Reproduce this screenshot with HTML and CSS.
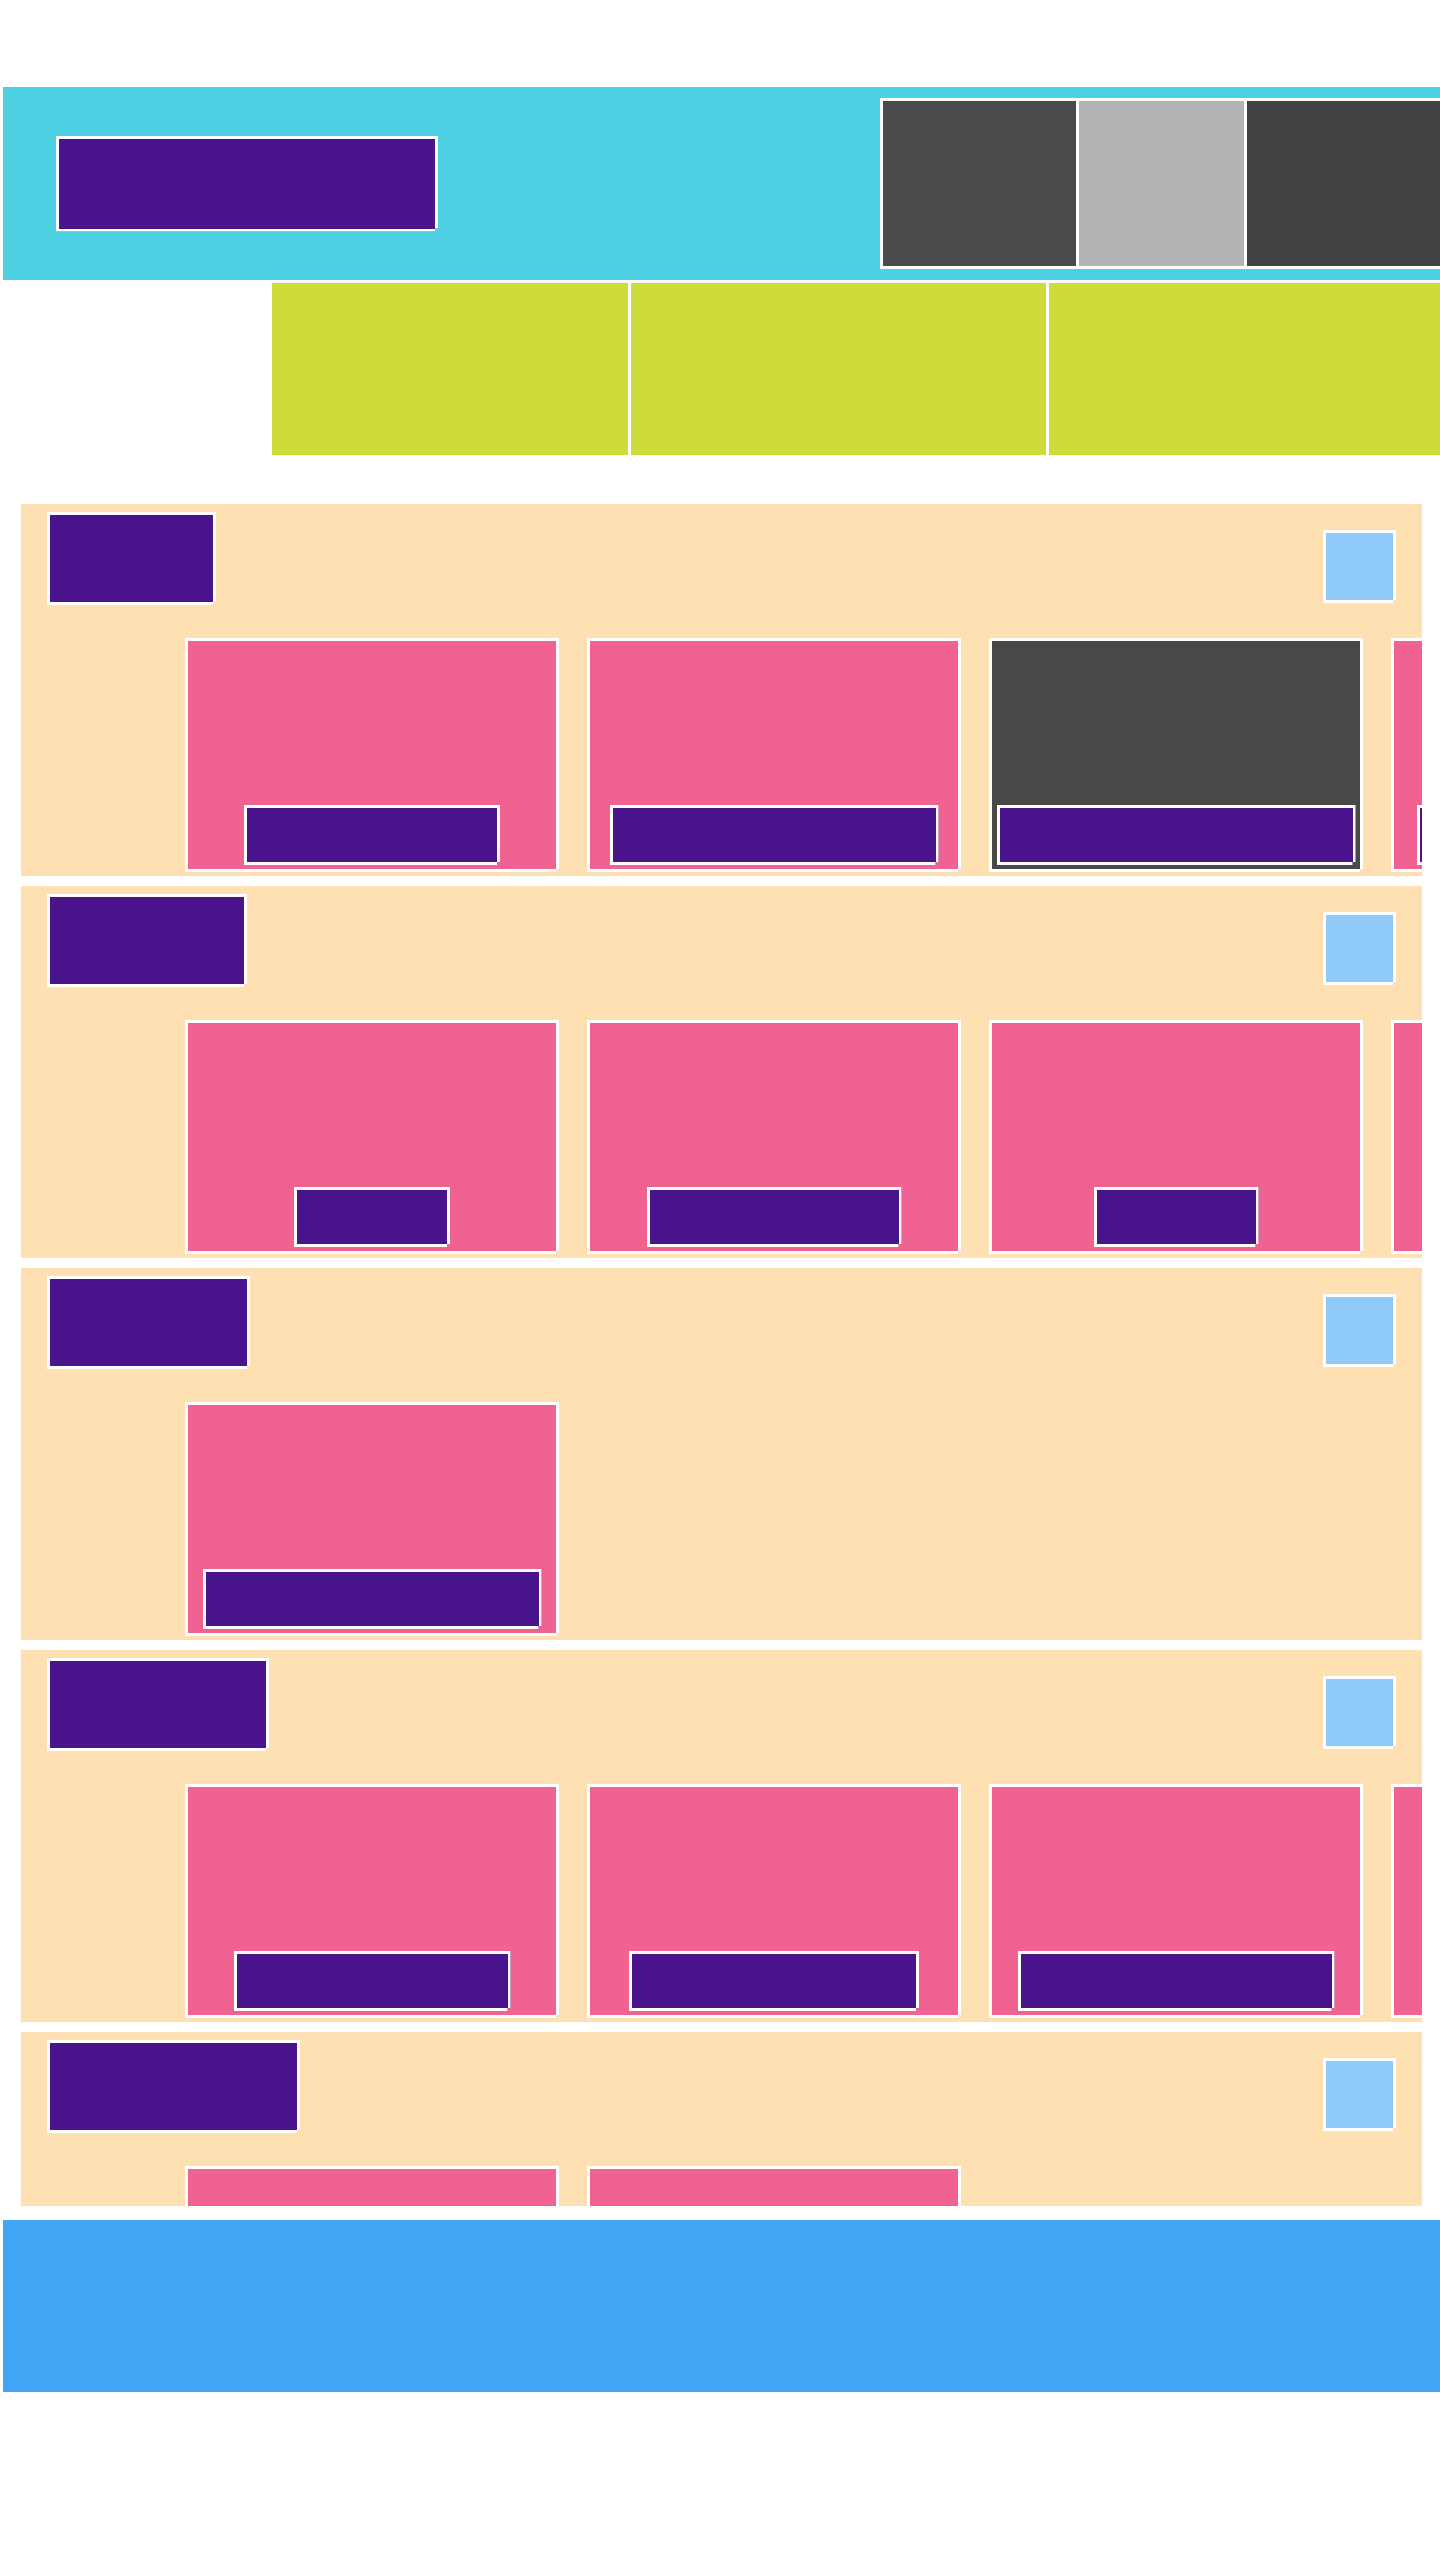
FILE: index.html
```html
<!DOCTYPE html>
<html lang="en">
<head>
  <meta charset="UTF-8" />
  <title>Catalogue</title>
  <meta name="viewport" content="width=device-width, initial-scale=1" />
  <link rel="stylesheet" href="styles.css">
</head>
<body>

  <header class="header">
    <div class="logo box"></div>
    <nav class="nav">
      <div class="nav-item nav-a"></div>
      <div class="nav-item nav-b"></div>
      <div class="nav-item nav-c"></div>
    </nav>
  </header>

  <div class="subnav">
    <div class="tab tab-1"></div>
    <div class="tab tab-2"></div>
    <div class="tab tab-3"></div>
  </div>

  <main class="main">

    <section class="row">
      <div class="row-top">
        <div class="label box l169"></div>
        <div class="more box"></div>
      </div>
      <div class="cards">
        <div class="card box"><div class="btn box w256"></div></div>
        <div class="card box"><div class="btn box w329"></div></div>
        <div class="card card-dark box"><div class="btn box w359"></div></div>
        <div class="card box"><div class="btn box w322"></div></div>
      </div>
    </section>

    <section class="row">
      <div class="row-top">
        <div class="label box l200"></div>
        <div class="more box"></div>
      </div>
      <div class="cards">
        <div class="card box"><div class="btn box w156"></div></div>
        <div class="card box"><div class="btn box w255"></div></div>
        <div class="card box"><div class="btn box w165"></div></div>
        <div class="card box"><div class="btn box w180"></div></div>
      </div>
    </section>

    <section class="row">
      <div class="row-top">
        <div class="label box l203"></div>
        <div class="more box"></div>
      </div>
      <div class="cards">
        <div class="card box"><div class="btn box w339"></div></div>
      </div>
    </section>

    <section class="row">
      <div class="row-top">
        <div class="label box l222"></div>
        <div class="more box"></div>
      </div>
      <div class="cards">
        <div class="card box"><div class="btn box w277"></div></div>
        <div class="card box"><div class="btn box w290"></div></div>
        <div class="card box"><div class="btn box w317"></div></div>
        <div class="card box"><div class="btn box w180"></div></div>
      </div>
    </section>

    <section class="row">
      <div class="row-top">
        <div class="label box l253"></div>
        <div class="more box"></div>
      </div>
      <div class="cards">
        <div class="card box"><div class="btn box w256"></div></div>
        <div class="card box"><div class="btn box w290"></div></div>
      </div>
    </section>

  </main>

  <footer class="footer"></footer>

</body>
</html>
```

FILE: styles.css
```css
body {
  margin: 0;
  background: #ffffff;
  font-family: "Liberation Sans", Arial, sans-serif;
  overflow-x: hidden;
}
.box {
  box-sizing: border-box;
  border: 3px solid #ffffff;
  clip-path: polygon(0 0, 100% 0, 100% calc(100% - 3px), calc(100% - 3px) calc(100% - 3px), calc(100% - 3px) 100%, 0 100%);
}

/* header */
.header {
  margin: 87px 0 0 3px;
  height: 193px;
  background: #4dd0e1;
  display: flex;
  align-items: center;
  padding-left: 53px;
  overflow: hidden;
}
.logo {
  flex: 0 0 382px;
  height: 96px;
  background: #4a148c;
}
.nav {
  flex-shrink: 0;
  margin-left: 442px;
  display: flex;
  gap: 3px;
  border: 3px solid #ffffff;
  background: #ffffff;
  height: 165px;
}
.nav-item {
  flex-shrink: 0;
}
.nav-a { width: 193px; background: #4a4a4a; }
.nav-b { width: 165px; background: #b3b3b3; }
.nav-c { width: 260px; background: #424242; }

/* sub navigation */
.subnav {
  margin: 3px 0 0 272px;
  height: 172px;
  display: flex;
  gap: 3px;
  overflow: hidden;
}
.tab {
  flex-shrink: 0;
  background: #cddc39;
}
.tab-1 { width: 356px; }
.tab-2 { width: 415px; }
.tab-3 { width: 420px; }

/* rows */
.main {
  margin: 49px 0 0 21px;
  width: 1401px;
  height: 1702px;
  overflow: hidden;
  display: flex;
  flex-direction: column;
  gap: 10px;
}
.row {
  flex-shrink: 0;
  box-sizing: border-box;
  height: 372px;
  padding: 8px 26px 0;
  background: #ffe0b2;
  overflow: hidden;
}
.row-top {
  display: flex;
  justify-content: space-between;
  align-items: flex-start;
}
.label {
  height: 93px;
  background: #4a148c;
}
.l169 { width: 169px; }
.l200 { width: 200px; }
.l203 { width: 203px; }
.l222 { width: 222px; }
.l253 { width: 253px; }
.more {
  width: 73px;
  height: 73px;
  margin-top: 18px;
  background: #90caf9;
}
.cards {
  display: flex;
  gap: 28px;
  margin: 33px 0 0 138px;
}
.card {
  flex: 0 0 374px;
  height: 234px;
  background: #f06292;
  display: flex;
  align-items: flex-end;
  justify-content: center;
  padding-bottom: 4px;
}
.card-dark {
  background: #484848;
}
.btn {
  flex-shrink: 0;
  height: 60px;
  background: #4a148c;
}
.w156 { width: 156px; }
.w165 { width: 165px; }
.w180 { width: 180px; }
.w255 { width: 255px; }
.w256 { width: 256px; }
.w277 { width: 277px; }
.w290 { width: 290px; }
.w317 { width: 317px; }
.w322 { width: 322px; }
.w329 { width: 329px; }
.w339 { width: 339px; }
.w359 { width: 359px; }

/* footer */
.footer {
  margin: 14px 0 0 3px;
  height: 172px;
  background: #42a5f5;
}
```
